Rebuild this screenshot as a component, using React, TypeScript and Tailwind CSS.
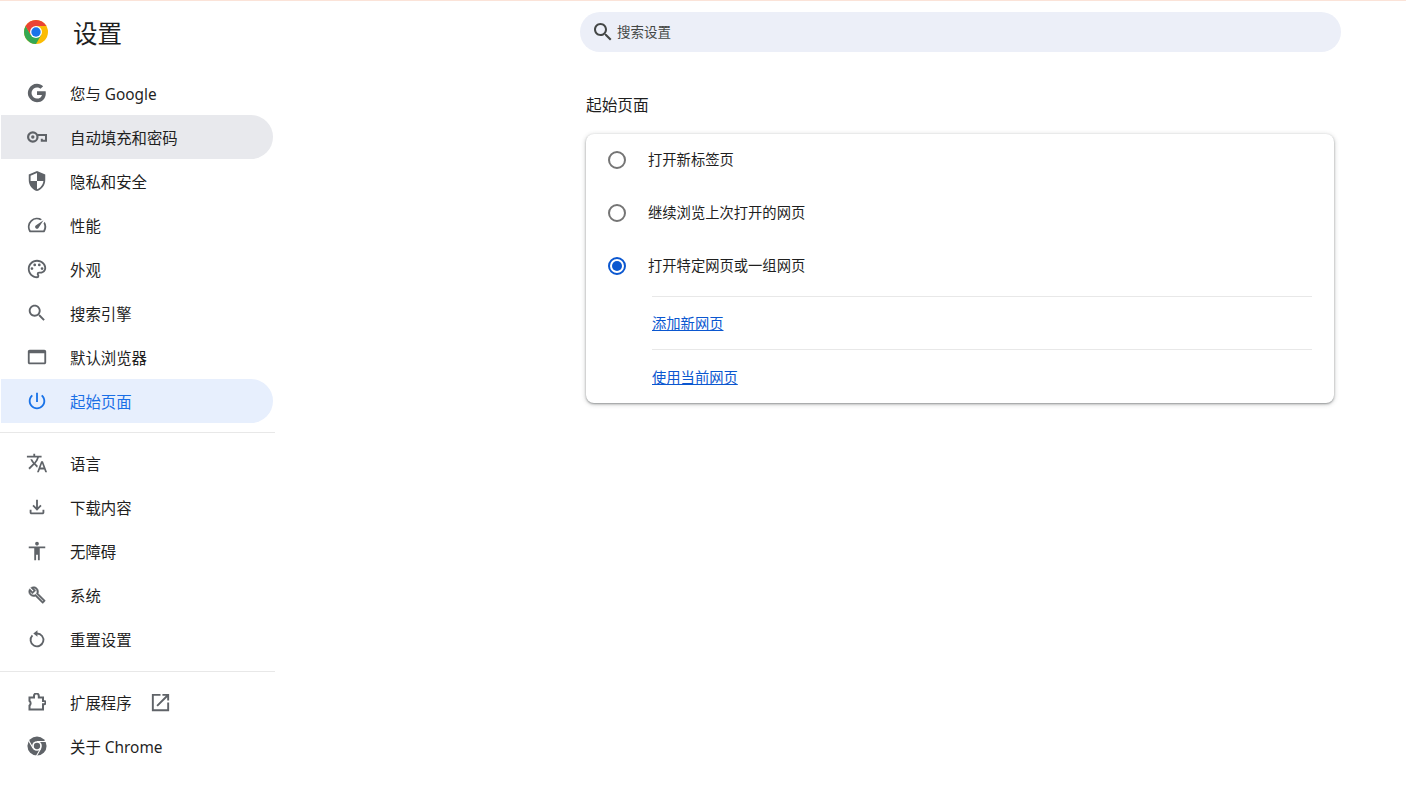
const paths = {
  google:
    'M22.56 12.25c0-.78-.07-1.53-.2-2.25H12v4.26h5.92c-.26 1.37-1.04 2.53-2.21 3.31v2.77h3.57c2.08-1.92 3.28-4.74 3.28-8.09zM12 23c2.97 0 5.46-.98 7.28-2.66l-3.57-2.77c-.98.66-2.23 1.06-3.71 1.06-2.86 0-5.29-1.93-6.16-4.53H2.18v2.84C3.99 20.53 7.7 23 12 23zM5.84 14.09c-.22-.66-.35-1.36-.35-2.09s.13-1.43.35-2.09V7.07H2.18C1.43 8.55 1 10.22 1 12s.43 3.45 1.18 4.93l2.85-2.22.81-.62zM12 5.38c1.62 0 3.06.56 4.21 1.64l3.15-3.15C17.45 2.09 14.97 1 12 1 7.7 1 3.99 3.47 2.18 7.07l3.66 2.84c.87-2.6 3.3-4.53 6.16-4.53z',
  shield:
    'M12 1L3 5v6c0 5.55 3.84 10.74 9 12 5.16-1.26 9-6.45 9-12V5l-9-4zm0 10.99h7c-.53 4.12-3.28 7.79-7 8.94V12H5V6.3l7-3.11v8.8z',
  speed:
    'M20.38 8.57l-1.23 1.85a8 8 0 0 1-.22 7.58H5.07A8 8 0 0 1 15.58 6.85l1.85-1.23A10 10 0 0 0 3.35 19a2 2 0 0 0 1.72 1h13.85a2 2 0 0 0 1.74-1 10 10 0 0 0-.27-10.44zm-9.79 6.84a2 2 0 0 0 2.83 0l5.66-8.49-8.49 5.66a2 2 0 0 0 0 2.83z',
  palette:
    'M12 22C6.49 22 2 17.51 2 12S6.49 2 12 2s10 4.04 10 9c0 3.31-2.69 6-6 6h-1.77c-.28 0-.5.22-.5.5 0 .12.05.23.13.33.41.47.64 1.06.64 1.67A2.5 2.5 0 0 1 12 22zm0-18c-4.41 0-8 3.59-8 8s3.59 8 8 8c.28 0 .5-.22.5-.5a.54.54 0 0 0-.14-.35c-.41-.46-.63-1.05-.63-1.65a2.5 2.5 0 0 1 2.5-2.5H16c2.21 0 4-1.79 4-4 0-3.86-3.59-7-8-7zM6.5 10a1.5 1.5 0 1 0 0 3 1.5 1.5 0 0 0 0-3zm3-4a1.5 1.5 0 1 0 0 3 1.5 1.5 0 0 0 0-3zm5 0a1.5 1.5 0 1 0 0 3 1.5 1.5 0 0 0 0-3zm3 4a1.5 1.5 0 1 0 0 3 1.5 1.5 0 0 0 0-3z',
  search:
    'M15.5 14h-.79l-.28-.27C15.41 12.59 16 11.11 16 9.5 16 5.91 13.09 3 9.5 3S3 5.91 3 9.5 5.91 16 9.5 16c1.61 0 3.09-.59 4.23-1.57l.27.28v.79l5 4.99L20.49 19l-4.99-5zm-6 0C7.01 14 5 11.99 5 9.5S7.01 5 9.5 5 14 7.01 14 9.5 11.99 14 9.5 14z',
  browser:
    'M20 4H4c-1.11 0-2 .9-2 2v12c0 1.1.89 2 2 2h16c1.1 0 2-.9 2-2V6c0-1.1-.89-2-2-2zm0 14H4V8h16v10z',
  power:
    'M13 3h-2v10h2V3zm4.83 2.17l-1.42 1.42C17.99 7.86 19 9.81 19 12c0 3.87-3.13 7-7 7s-7-3.13-7-7c0-2.19 1.01-4.14 2.58-5.42L6.17 5.17C4.23 6.82 3 9.26 3 12c0 4.97 4.03 9 9 9s9-4.03 9-9c0-2.74-1.23-5.18-3.17-6.83z',
  translate:
    'M12.87 15.07l-2.54-2.51.03-.03c1.74-1.94 2.98-4.17 3.71-6.53H17V4h-7V2H8v2H1v1.99h11.17C11.5 7.92 10.44 9.75 9 11.35 8.07 10.32 7.3 9.19 6.69 8h-2c.73 1.63 1.73 3.17 2.98 4.56l-5.09 5.02L4 19l5-5 3.11 3.11.76-2.04zM18.5 10h-2L12 22h2l1.12-3h4.75L21 22h2l-4.5-12zm-2.62 7l1.62-4.33L19.12 17h-3.24z',
  download:
    'M18 15v3H6v-3H4v3c0 1.1.9 2 2 2h12c1.1 0 2-.9 2-2v-3h-2zm-1-4l-1.41-1.41L13 12.17V4h-2v8.17L8.41 9.59 7 11l5 5 5-5z',
  accessibility:
    'M12 2c1.1 0 2 .9 2 2s-.9 2-2 2-2-.9-2-2 .9-2 2-2zm9 7h-6v13h-2v-6h-2v6H9V9H3V7h18v2z',
  wrench:
    'M22.61 18.99l-9.08-9.08c.93-2.34.45-5.1-1.44-7C9.79.61 6.21.4 3.66 2.26L7.5 6.11 6.08 7.52 2.25 3.69C.39 6.23.6 9.82 2.9 12.11c1.86 1.86 4.57 2.35 6.89 1.48l9.11 9.11c.39.39 1.02.39 1.41 0l2.3-2.3c.4-.38.4-1.01 0-1.41zm-3 1.6l-9.46-9.46c-.61.45-1.29.72-2 .82-1.36.2-2.79-.21-3.83-1.25C3.37 9.76 2.93 8.5 3 7.26l3.09 3.09 4.24-4.24-3.09-3.09c1.24-.07 2.49.37 3.44 1.31 1.08 1.08 1.49 2.57 1.24 3.96-.12.71-.42 1.37-.88 1.96l9.45 9.45-.88.88z',
  openNew:
    'M19 19H5V5h7V3H3v18h18v-9h-2v7zM14 3v2h3.59l-9.83 9.83 1.41 1.41L19 6.41V10h2V3h-7z',
};

type IconName = keyof typeof paths;

function Icon({ name, className = '' }: { name: IconName; className?: string }) {
  return (
    <svg viewBox="0 0 24 24" fill="currentColor" className={className}>
      <path d={paths[name]} />
    </svg>
  );
}

function KeyIcon() {
  return (
    <svg viewBox="0 0 20 12" fill="none" stroke="currentColor" className="h-3 w-5">
      <circle cx="5.8" cy="6" r="4.7" strokeWidth="2.2" />
      <circle cx="5.8" cy="6" r="1.7" fill="currentColor" stroke="none" />
      <path d="M10.5 3.9H19V9.8H14.8V7.8" strokeWidth="2" />
    </svg>
  );
}

function ExtensionIcon() {
  return (
    <svg viewBox="0 0 18 18" fill="none" stroke="currentColor" strokeWidth="2" className="h-[18px] w-[18px]">
      <path d="M1.5 4.5H6V3a2.4 2.4 0 0 1 4.8 0V4.5H15V8H16a1.6 1.6 0 0 1 0 3.2H15V16.5H1.5V12.6a2.9 2.9 0 0 0 0-4.6Z" />
    </svg>
  );
}

function RestoreIcon() {
  return (
    <svg viewBox="0 0 24 24" className="h-[22px] w-[22px]">
      <path d="M12 6A7 7 0 1 1 7 8.1" fill="none" stroke="currentColor" strokeWidth="2" />
      <path d="M12.5 2.5V9.5L8 6Z" fill="currentColor" />
    </svg>
  );
}

function ChromeLogo() {
  return (
    <svg viewBox="0 0 24 24" className="mb-[5px] h-6 w-6 shrink-0">
      <circle cx="12" cy="12" r="12" fill="#fbbc04" />
      <path d="M6.8 15L1.61 6A12 12 0 0 0 12 24L17.2 15Z" fill="#34a853" />
      <path d="M12 6H22.39A12 12 0 0 0 1.61 6L6.8 15Z" fill="#ea4335" />
      <circle cx="12" cy="12" r="6" fill="#fff" />
      <circle cx="12" cy="12" r="4.7" fill="#1a73e8" />
    </svg>
  );
}

function ChromeMono() {
  return (
    <svg viewBox="0 0 24 24" className="h-5 w-5">
      <circle cx="12" cy="12" r="11.5" fill="#5f6368" />
      <path d="M12 6.6H23M7.3 14.7L1.9 5.4M16.7 14.7L11.3 24" stroke="#fff" strokeWidth="1.3" fill="none" />
      <circle cx="12" cy="12" r="5.8" fill="#fff" />
      <circle cx="12" cy="12" r="3.8" fill="#5f6368" />
    </svg>
  );
}

function NavItem({
  icon,
  label,
  state,
  children,
}: {
  icon: React.ReactNode;
  label: string;
  state?: 'hover' | 'active';
  children?: React.ReactNode;
}) {
  const bg = state === 'hover' ? 'bg-[#e8e9ed]' : state === 'active' ? 'bg-[#e7effd]' : '';
  const color = state === 'active' ? 'text-[#1a6fe6]' : 'text-[#1f1f1f]';
  return (
    <div className={`ml-px flex h-11 w-[272px] items-center rounded-r-[22px] ${bg}`}>
      <span
        className={`flex w-[69px] shrink-0 justify-center pl-[3px] ${
          state === 'active' ? 'text-[#1a73e8]' : 'text-[#5f6368]'
        }`}
      >
        {icon}
      </span>
      <span className={`pt-[3px] text-[15.4px] leading-none ${color}`}>{label}</span>
      {children}
    </div>
  );
}

const navIcon = 'h-[22px] w-[22px]';

function Radio({ checked }: { checked?: boolean }) {
  return (
    <span
      className={`mb-[2px] flex h-[18px] w-[18px] shrink-0 items-center justify-center rounded-full border-2 ${
        checked ? 'border-[#0b57d0]' : 'border-[#757575]'
      }`}
    >
      {checked && <span className="h-[10px] w-[10px] rounded-full bg-[#0b57d0]" />}
    </span>
  );
}

function RadioRow({ label, checked }: { label: string; checked?: boolean }) {
  return (
    <div className="flex h-[53px] items-center pl-[22px]">
      <Radio checked={checked} />
      <span className="ml-[22px] text-[14.3px] leading-none text-[#1f1f1f]">{label}</span>
    </div>
  );
}

export default function App() {
  return (
    <div className="min-h-[799px] bg-white font-['Noto_Sans','Noto_Sans_CJK_SC',sans-serif]">
      <div className="h-px bg-[#fbe3d8]" />
      <div className="flex">
        <aside className="w-[275px] shrink-0">
          <div className="flex h-[70px] items-center pb-[3px] pl-6">
            <ChromeLogo />
            <span className="ml-[25px] text-[24.5px] leading-none text-[#1f1f1f]">设置</span>
          </div>
          <NavItem icon={<Icon name="google" className="h-5 w-5" />} label="您与 Google" />
          <NavItem icon={<KeyIcon />} label="自动填充和密码" state="hover" />
          <NavItem icon={<Icon name="shield" className={navIcon} />} label="隐私和安全" />
          <NavItem icon={<Icon name="speed" className={navIcon} />} label="性能" />
          <NavItem icon={<Icon name="palette" className={navIcon} />} label="外观" />
          <NavItem icon={<Icon name="search" className={navIcon} />} label="搜索引擎" />
          <NavItem icon={<Icon name="browser" className={navIcon} />} label="默认浏览器" />
          <NavItem icon={<Icon name="power" className={navIcon} />} label="起始页面" state="active" />
          <div className="mt-[9px] mb-2 h-px bg-[#e8e8e8]" />
          <NavItem icon={<Icon name="translate" className={navIcon} />} label="语言" />
          <NavItem icon={<Icon name="download" className={navIcon} />} label="下载内容" />
          <NavItem icon={<Icon name="accessibility" className={navIcon} />} label="无障碍" />
          <NavItem icon={<Icon name="wrench" className="h-[18px] w-[18px] stroke-current stroke-[0.7]" />} label="系统" />
          <NavItem icon={<RestoreIcon />} label="重置设置" />
          <div className="mt-[10px] mb-2 h-px bg-[#e8e8e8]" />
          <NavItem icon={<ExtensionIcon />} label="扩展程序">
            <Icon name="openNew" className="ml-[17px] h-[23px] w-[23px] text-[#5f6368]" />
          </NavItem>
          <NavItem icon={<ChromeMono />} label="关于 Chrome" />
        </aside>

        <main className="ml-[305px] w-[761px]">
          <div className="mt-[11px] flex h-10 items-center rounded-[20px] bg-[#eceff8] pl-[11px]">
            <Icon name="search" className="h-[24px] w-[24px] text-[#444746]" />
            <span className="ml-[2px] pt-px text-[13.5px] leading-none text-[#444746]">搜索设置</span>
          </div>

          <div className="ml-[6px] w-[748px]">
            <h2 className="mt-[43px] text-[15.7px] leading-[20px] font-normal text-[#1f1f1f]">起始页面</h2>
            <div className="mt-[19px] h-[269px] rounded-lg bg-white shadow-[0_1px_4px_1px_rgba(60,64,67,0.2),0_1px_2px_0_rgba(60,64,67,0.45)]">
              <RadioRow label="打开新标签页" />
              <RadioRow label="继续浏览上次打开的网页" />
              <RadioRow label="打开特定网页或一组网页" checked />
              <div className="mt-[3px] mr-[22px] ml-[66px]">
                <div className="flex h-[53px] items-center border-t border-[#e8e8e8] pt-[2px]">
                  <a className="text-[14.3px] leading-none text-[#0b57d0] underline">添加新网页</a>
                </div>
                <div className="flex h-[53px] items-center border-t border-[#e8e8e8] pt-1">
                  <a className="text-[14.3px] leading-none text-[#0b57d0] underline">使用当前网页</a>
                </div>
              </div>
            </div>
          </div>
        </main>
      </div>
    </div>
  );
}
